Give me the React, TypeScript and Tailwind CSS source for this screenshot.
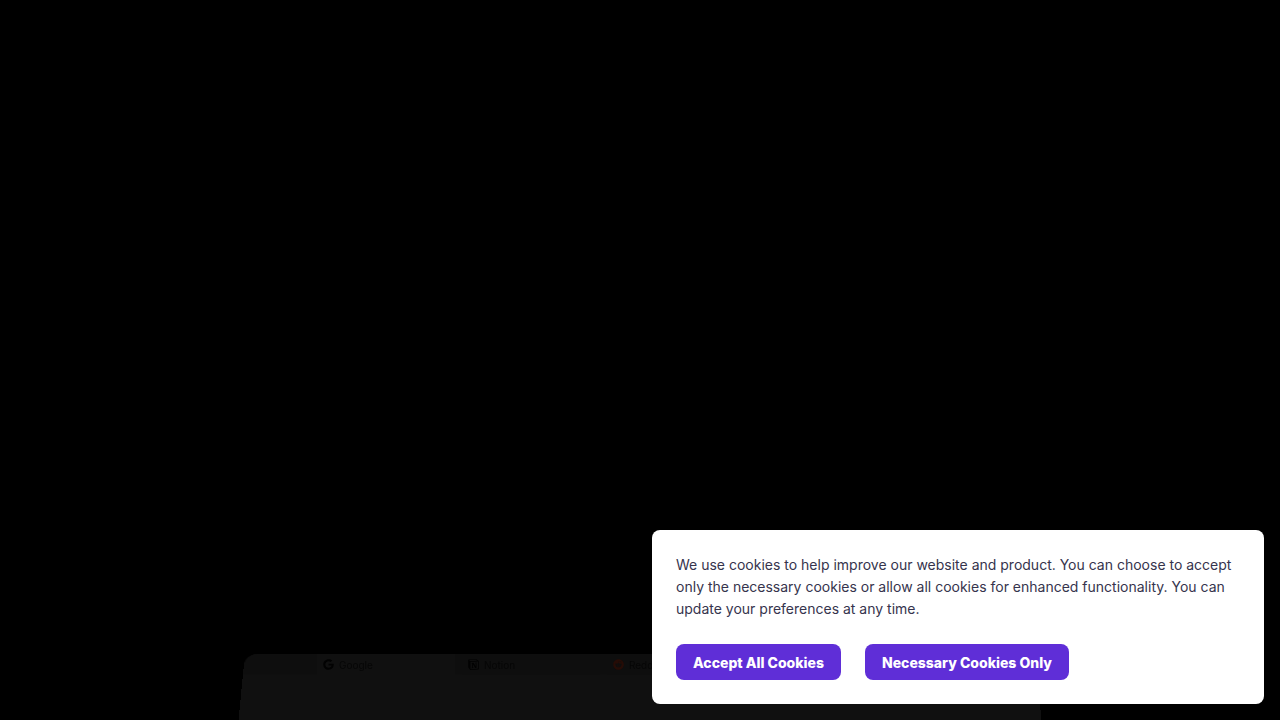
import { SiNotion } from "react-icons/si"
import { FaGoogle, FaReddit } from "react-icons/fa"

const tabs = [
  { name: "Google", icon: <FaGoogle className="size-[11px] text-[#020202]" />, active: true },
  { name: "Notion", icon: <SiNotion className="size-[11px] text-[#020202]" />, active: false },
  { name: "Reddit", icon: <FaReddit className="size-[11px] text-[#260c06]" />, active: false },
]

function BrowserPreview() {
  return (
    <div className="relative mx-auto h-[66px] w-full max-w-[830px] px-5 [perspective:1000px] [perspective-origin:top]">
      {/* tilted window frame */}
      <div className="absolute inset-x-5 top-0 h-24 origin-top rounded-t-xl bg-[#101010] [transform:rotateX(14deg)]">
        <div className="h-[21px] rounded-t-xl bg-[#0e0e0e]" />
      </div>

      <div className="relative flex h-[21px] gap-[7px] pl-[72px]">
        {tabs.map((tab) => (
          <div
            key={tab.name}
            className={`flex w-[138px] items-center gap-[5px] px-[6px] ${tab.active ? "bg-[#101010]" : "bg-[#0e0e0e]"}`}
          >
            {tab.icon}
            <span className="text-[10px] leading-3 text-[#060606]">{tab.name}</span>
          </div>
        ))}
      </div>
    </div>
  )
}

function CookieBanner() {
  const buttonClass = "h-9 cursor-pointer rounded-lg bg-[#5f2ed7] px-[17px] pt-0.5 text-sm font-extrabold text-white"

  return (
    <section
      aria-label="Cookies"
      className="fixed right-4 bottom-4 z-10 ml-4 flex max-w-[612px] flex-col gap-6 rounded-lg bg-white p-6"
    >
      <p className="text-sm leading-[22px] text-[#36344d]">
        We use cookies to help improve our website and product. You can choose to accept only the necessary
        cookies or allow all cookies for enhanced functionality. You can update your preferences at any time.
      </p>
      <div className="flex flex-wrap gap-6">
        <button type="button" className={buttonClass}>Accept All Cookies</button>
        <button type="button" className={buttonClass}>Necessary Cookies Only</button>
      </div>
    </section>
  )
}

export default function App() {
  return (
    <div className="flex min-h-screen flex-col justify-end bg-black font-['Inter',sans-serif]">
      <main className="overflow-hidden">
        <BrowserPreview />
      </main>
      <CookieBanner />
    </div>
  )
}
